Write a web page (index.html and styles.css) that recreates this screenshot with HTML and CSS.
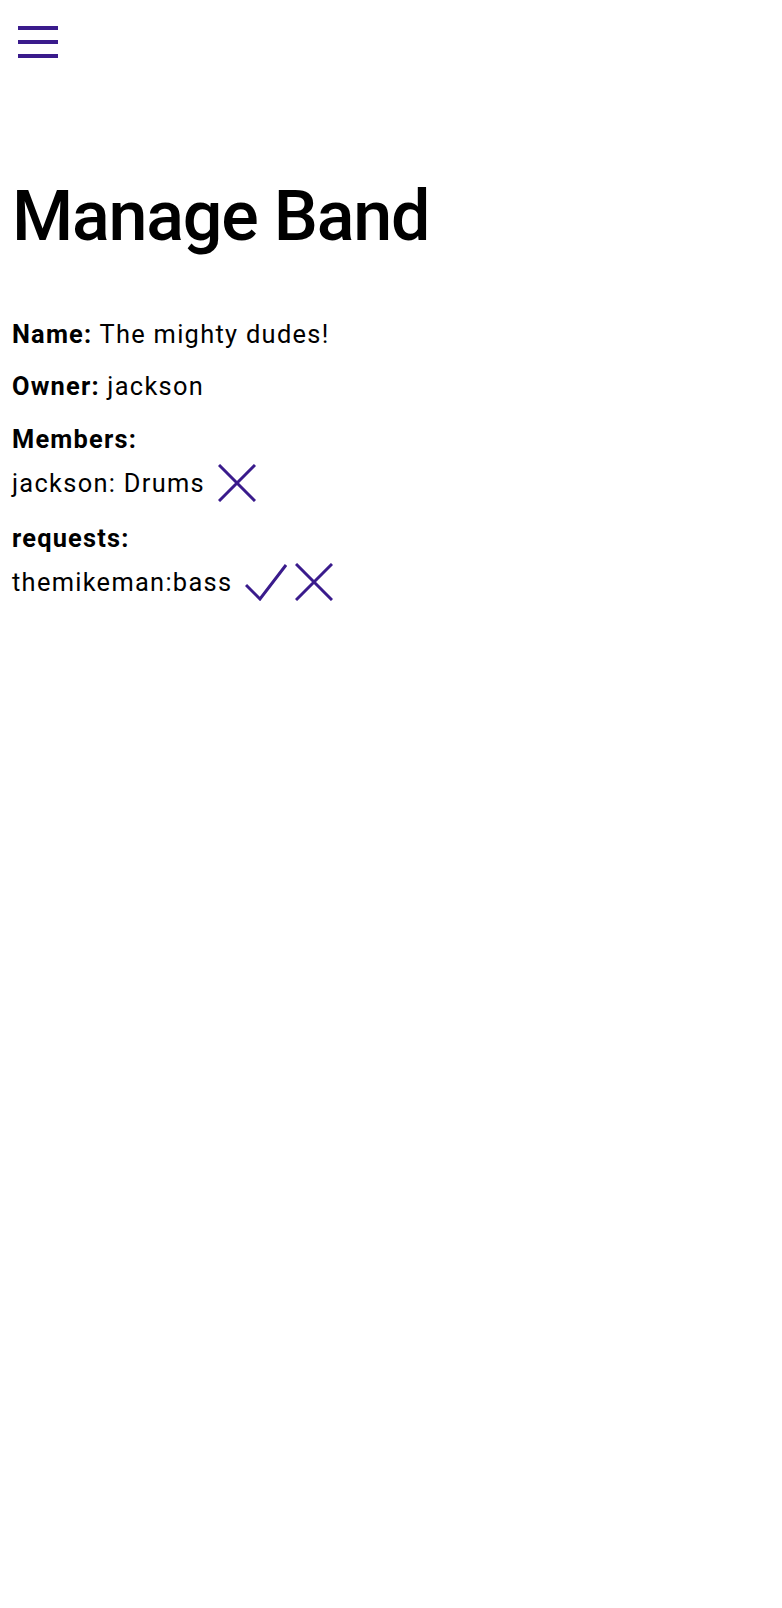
FILE: index.html
```html
<!DOCTYPE html>
<html lang="en">
<head>
<meta charset="utf-8">
<title>Manage Band</title>
<link rel="stylesheet" href="styles.css">
</head>
<body>
<header class="topbar">
  <button class="menu-btn" aria-label="Menu">
    <svg width="40" height="32" viewBox="0 0 40 32" aria-hidden="true">
      <rect x="0" y="0" width="40" height="4"/>
      <rect x="0" y="14" width="40" height="4"/>
      <rect x="0" y="28" width="40" height="4"/>
    </svg>
  </button>
</header>
<main class="page">
  <h1 class="title">Manage Band</h1>
  <p class="field"><b>Name:</b> The mighty dudes!</p>
  <p class="field"><b>Owner:</b> jackson</p>
  <section class="group">
    <b class="label">Members:</b>
    <div class="row">
      <span class="row-text">jackson: Drums</span>
      <button class="icon-btn" aria-label="Remove">
        <svg width="38" height="38" viewBox="0 0 38 38" aria-hidden="true"><path d="M1 1L37 37M37 1L1 37"/></svg>
      </button>
    </div>
  </section>
  <section class="group">
    <b class="label">requests:</b>
    <div class="row">
      <span class="row-text">themikeman:bass</span>
      <div class="actions">
        <button class="icon-btn check" aria-label="Accept">
          <svg width="42" height="38" viewBox="0 0 42 38" aria-hidden="true"><path d="M1 22L15 36L41 2"/></svg>
        </button>
        <button class="icon-btn" aria-label="Decline">
          <svg width="38" height="38" viewBox="0 0 38 38" aria-hidden="true"><path d="M1 1L37 37M37 1L1 37"/></svg>
        </button>
      </div>
    </div>
  </section>
</main>
</body>
</html>
```

FILE: styles.css
```css
html, body {
  margin: 0;
  padding: 0;
  background: #ffffff;
}

body {
  font-family: Roboto, "Liberation Sans", sans-serif;
  color: #000000;
}

.topbar {
  padding: 26px 0 0 18px;
  height: 32px;
}

.menu-btn {
  display: block;
  padding: 0;
  margin: 0;
  border: 0;
  background: none;
  line-height: 0;
}

.menu-btn svg {
  fill: #3a1b8c;
  display: block;
}

.page {
  padding: 0 12px;
}

.title {
  margin: 116px 0 61px;
  font-size: 70px;
  line-height: 84px;
  font-weight: 500;
  letter-spacing: -1.2px;
}

.field {
  margin: 0 0 22px;
  font-size: 25.4px;
  line-height: 30px;
  letter-spacing: 1.3px;
}

.field + .field {
  margin-bottom: 23px;
}

b {
  font-weight: 700;
  letter-spacing: 1.2px;
}

.group {
  display: flex;
  flex-direction: column;
  gap: 10px;
  margin-bottom: 21px;
  font-size: 25.4px;
  line-height: 30px;
  letter-spacing: 1.3px;
}

.label {
  display: block;
}

.row {
  display: flex;
  align-items: center;
  gap: 13px;
}

.actions {
  display: flex;
  align-items: center;
  gap: 8px;
}

.icon-btn {
  padding: 0;
  margin: 0;
  border: 0;
  background: none;
  line-height: 0;
  display: block;
}

.icon-btn svg {
  display: block;
  fill: none;
  stroke: #3a1b8c;
  stroke-width: 3;
}
```
